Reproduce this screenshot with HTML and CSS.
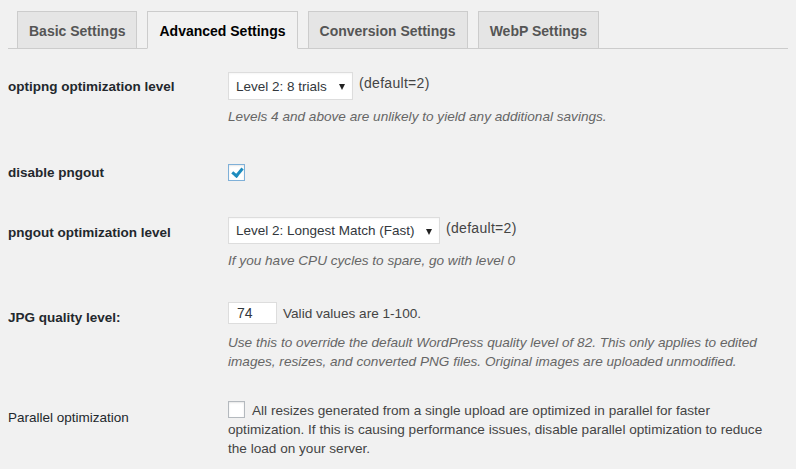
FILE: index.html
```html
<!DOCTYPE html>
<html lang="en">
<head>
  <meta charset="UTF-8">
  <title>EWWW Image Optimizer - Advanced Settings</title>
  <link rel="stylesheet" href="styles.css">
</head>
<body>

  <h2 class="nav-tab-wrapper">
    <span class="nav-tab">Basic Settings</span>
    <span class="nav-tab nav-tab-active">Advanced Settings</span>
    <span class="nav-tab">Conversion Settings</span>
    <span class="nav-tab">WebP Settings</span>
  </h2>

  <table class="form-table">
    <tr class="row-optipng">
      <th>optipng optimization level</th>
      <td>
        <div class="field-line">
          <span class="select-wrap">
            <select class="select-short">
              <option>Level 2: 8 trials</option>
            </select>
          </span>
          <span class="default-note">(default=2)</span>
        </div>
        <p class="description">Levels 4 and above are unlikely to yield any additional savings.</p>
      </td>
    </tr>
    <tr class="row-disable">
      <th>disable pngout</th>
      <td><input type="checkbox" class="check check-alone" checked></td>
    </tr>
    <tr class="row-pngout">
      <th>pngout optimization level</th>
      <td>
        <div class="field-line">
          <span class="select-wrap">
            <select class="select-long">
              <option>Level 2: Longest Match (Fast)</option>
            </select>
          </span>
          <span class="default-note">(default=2)</span>
        </div>
        <p class="description">If you have CPU cycles to spare, go with level 0</p>
      </td>
    </tr>
    <tr class="row-jpg">
      <th>JPG quality level:</th>
      <td>
        <div class="field-line">
          <input type="text" class="small-text" value="74">
          <span>Valid values are 1-100.</span>
        </div>
        <p class="description description-jpg">Use this to override the default WordPress quality level of 82. This only applies to edited images, resizes, and converted PNG files. Original images are uploaded unmodified.</p>
      </td>
    </tr>
    <tr class="row-parallel">
      <th class="plain">Parallel optimization</th>
      <td><input type="checkbox" class="check"> All resizes generated from a single upload are optimized in parallel for faster optimization. If this is causing performance issues, disable parallel optimization to reduce the load on your server.</td>
    </tr>
  </table>

</body>
</html>
```

FILE: styles.css
```css
body {
  margin: 0 8px;
  background-color: #f1f1f1;
  color: #444;
  font-family: "Liberation Sans", Arial, sans-serif;
  font-size: 13.6px;
  line-height: 19px;
}

/* tabs */
.nav-tab-wrapper {
  display: flex;
  gap: 10px;
  margin: 11px 0 0;
  padding: 0 0 0 9px;
  border-bottom: 1px solid #ccc;
  font-size: 14px;
  line-height: 24px;
}
.nav-tab {
  margin-bottom: -1px;
  padding: 7px 11px 5px 11px;
  border: 1px solid #ccc;
  background-color: #e5e5e5;
  color: #555;
  font-weight: 600;
}
.nav-tab-active {
  border-bottom-color: #f1f1f1;
  background-color: #f1f1f1;
  color: #000;
}

/* settings table */
.form-table {
  margin-top: 8px;
  border-collapse: collapse;
  width: 100%;
}
.form-table th {
  width: 220px;
  padding: 22px 0 0 0;
  text-align: left;
  vertical-align: top;
  color: #23282d;
  font-size: 13.5px;
  font-weight: 600;
  line-height: 17px;
}
.form-table th.plain {
  font-weight: normal;
}
.form-table td {
  padding: 15px 10px 15px 0;
  vertical-align: top;
}
.row-optipng th {
  padding-top: 21px;
}
.row-disable td {
  padding: 23px 10px 21px 0;
}
.row-disable th {
  padding-top: 23px;
}
.row-pngout td {
  padding-bottom: 17px;
}
.row-parallel th {
  padding-top: 23px;
}

.field-line {
  display: flex;
  align-items: center;
  gap: 6px;
}

.select-wrap {
  position: relative;
  display: block;
}
.select-wrap::after {
  content: "";
  position: absolute;
  right: 8px;
  top: 12px;
  border-left: 3px solid transparent;
  border-right: 3px solid transparent;
  border-top: 6px solid #222;
  pointer-events: none;
}
select {
  appearance: none;
  -webkit-appearance: none;
  display: block;
  height: 28px;
  margin: 0;
  padding: 2px 7px;
  border: 1px solid #ddd;
  border-radius: 0;
  background-color: #fff;
  color: #32373c;
  font-family: inherit;
  font-size: 13.5px;
  box-shadow: inset 0 1px 2px rgba(0, 0, 0, 0.04);
}
.select-short {
  width: 125px;
}
.select-long {
  width: 212px;
  height: 27px;
}
.default-note {
  margin-top: -5px;
  font-size: 14px;
  letter-spacing: 0.3px;
}

.description {
  margin: 7px 0 0;
  color: #666;
  font-style: italic;
}
.description-jpg {
  margin-top: 9px;
}

.small-text {
  width: 49px;
  height: 22px;
  box-sizing: border-box;
  margin: 0;
  padding: 0 8px;
  border: 1px solid #ddd;
  background-color: #fff;
  color: #32373c;
  font-family: inherit;
  font-size: 14px;
}

.check {
  appearance: none;
  -webkit-appearance: none;
  position: relative;
  box-sizing: border-box;
  width: 17px;
  height: 17px;
  margin: -3px 4px 0 0;
  border: 1px solid #b4b9be;
  background-color: #fff;
  vertical-align: middle;
  box-shadow: inset 0 1px 2px rgba(0, 0, 0, 0.1);
}
.check-alone {
  display: block;
  margin: 0;
}
.check:checked {
  border-color: #7fb0d8;
}
.check:checked::before {
  content: "";
  position: absolute;
  left: 5px;
  top: 1px;
  width: 4px;
  height: 8px;
  border-right: 3px solid #1e8cbe;
  border-bottom: 3px solid #1e8cbe;
  transform: rotate(40deg);
}
```
